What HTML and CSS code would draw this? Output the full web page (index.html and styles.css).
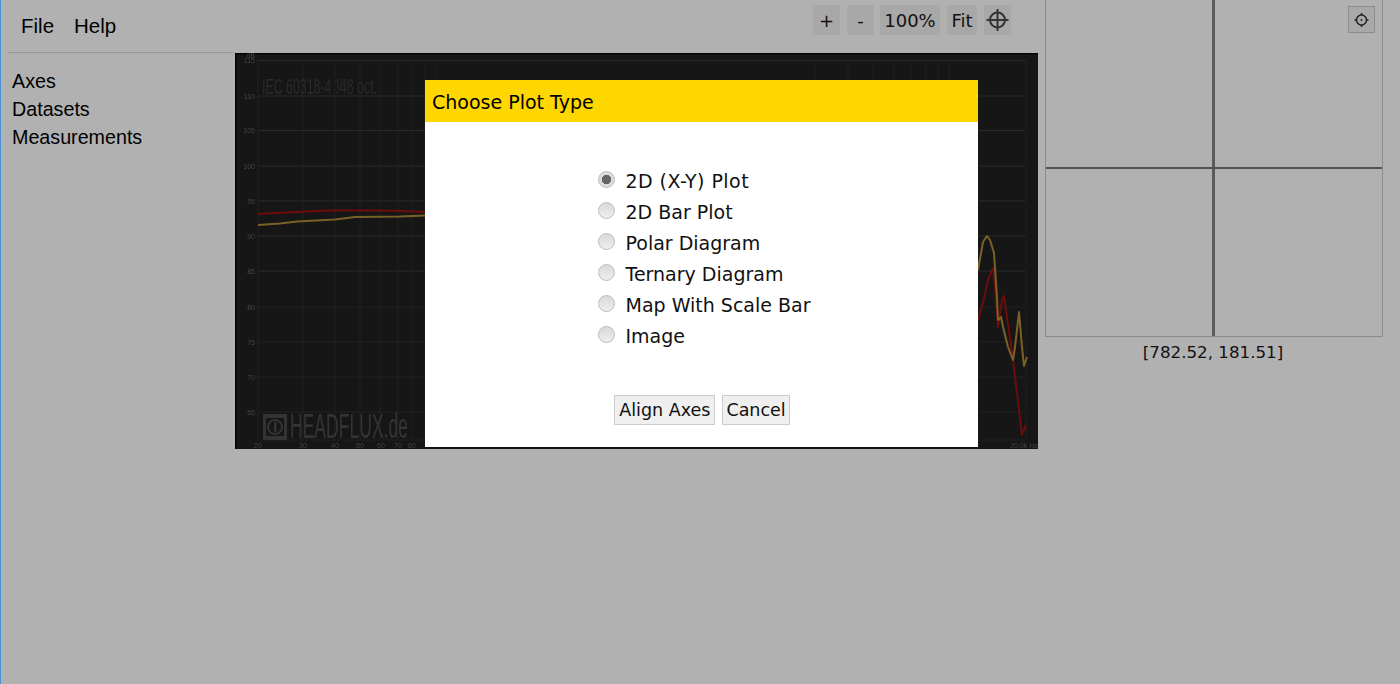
FILE: index.html
```html
<!DOCTYPE html>
<html lang="en">
<head>
<meta charset="utf-8">
<title>Plot digitizer</title>
<link rel="stylesheet" href="styles.css">
</head>
<body>
<div class="app">
  <div class="workspace">
    <header class="topbar">
      <nav class="menubar">
        <span class="menu-item">File</span>
        <span class="menu-item">Help</span>
      </nav>
      <div class="toolbar">
        <button class="tool tool-plus">+</button>
        <button class="tool tool-minus">-</button>
        <button class="tool tool-zoom">100%</button>
        <button class="tool tool-fit">Fit</button>
        <button class="tool tool-target" aria-label="Target">
          <svg width="27" height="30" viewBox="0 0 27 30"><circle cx="13.500" cy="15" r="7.500" fill="none" stroke="#333" stroke-width="2"/><path d="M13.500 4V26M2.500 15H24.500" stroke="#333" stroke-width="2"/></svg>
        </button>
      </div>
    </header>
    <div class="content">
      <aside class="sidebar">
        <div class="side-item">Axes</div>
        <div class="side-item">Datasets</div>
        <div class="side-item">Measurements</div>
      </aside>
      <div class="chart">
        <svg class="chart-svg" width="803" height="396" viewBox="235 53 803 396">
          <rect x="235" y="53" width="803" height="396" fill="#161616"/>
          <path d="M235 53.500H1038M235.500 53V449" stroke="#000" stroke-width="1.500"/>
          <g stroke="#2b2b2b" stroke-width="1">
            <path d="M258 60.500H1026M258 96H1026M258 130.500H1026M258 166H1026M258 201H1026M258 236H1026M258 271H1026"/>
          </g>
          <g stroke="#212121" stroke-width="1">
            <path d="M258 307H1026M258 342H1026M258 377H1026M258 412H1026M258 440H1026"/>
            <path d="M258 60V440M303 60V440M335 60V440M360 60V440M380 60V440M398 60V440M412 60V440M425 60V440M436 60V440M815 60V440M848 60V440M873 60V440M894 60V440M911 60V440M926 60V440M938 60V440M949 60V440M1026 60V440"/>
          </g>
          <g class="tick-text" text-anchor="end">
            <text x="255" y="58">dB</text>
            <text x="255" y="63">115</text>
            <text x="255" y="99">110</text>
            <text x="255" y="133">105</text>
            <text x="255" y="169">100</text>
            <text x="255" y="204">95</text>
            <text x="255" y="239">90</text>
            <text x="255" y="274">85</text>
            <text x="255" y="310">80</text>
            <text x="255" y="345">75</text>
            <text x="255" y="380">70</text>
            <text x="255" y="415">65</text>
          </g>
          <g class="tick-text" text-anchor="middle">
            <text x="258" y="448">20</text>
            <text x="303" y="448">30</text>
            <text x="335" y="448">40</text>
            <text x="360" y="448">50</text>
            <text x="381" y="448">60</text>
            <text x="398" y="448">70</text>
            <text x="412" y="448">80</text>
            <text x="1024" y="448">20.0k Hz</text>
          </g>
          <text class="iec" x="262" y="94" textLength="115" lengthAdjust="spacingAndGlyphs">IEC 60318-4  ⅟48 oct.</text>
          <g class="logo">
            <rect x="263" y="414" width="24" height="26" fill="#333"/>
            <rect x="266" y="418" width="18" height="18" fill="#161616"/>
            <circle cx="275" cy="427" r="7" fill="none" stroke="#333" stroke-width="2"/>
            <rect x="274" y="422" width="2.500" height="10" fill="#333"/>
          </g>
          <text class="brand" x="290" y="438" textLength="118" lengthAdjust="spacingAndGlyphs">HEADFLUX.de</text>
          <g fill="none" stroke-width="2" stroke-linejoin="round">
            <path stroke="#7a6226" d="M258 225L280 223.500L297 221.500L335 219.500L355 217L400 216.500L426 215.500"/>
            <path stroke="#6e0c0c" d="M258 214L275 213L297 212L327 210.500L380 210.500L400 211L426 212"/>
            <path stroke="#6e0c0c" d="M978 320L983 303L988 280L993 268L995 287L998 327L1002 300L1004 296L1007 317L1013 360L1017 393L1022 435L1026 425"/>
            <path stroke="#7a6226" d="M978 270L983 242L987 236L990 240L994 253L997 297L998 320L1001 317L1003 327L1008 347L1013 360L1015 347L1019 312L1022 347L1024 366L1027 357"/>
          </g>
        </svg>
      </div>
    </div>
  </div>
  <aside class="inspector">
    <div class="magnifier">
      <span class="cross-v"></span>
      <span class="cross-h"></span>
      <button class="gear" aria-label="Settings">
        <svg width="17" height="17" viewBox="0 0 17 17"><circle cx="8.500" cy="9" r="5" fill="none" stroke="#222" stroke-width="1.500"/><circle cx="8.500" cy="9" r="1" fill="#222"/><path d="M8.500 2V4M8.500 14V16M1.500 9H3.500M13.500 9H15.500" stroke="#222" stroke-width="1.500"/></svg>
      </button>
    </div>
    <div class="coords">[782.52, 181.51]</div>
  </aside>
</div>

<section class="dialog">
  <h2 class="dialog-title">Choose Plot Type</h2>
  <div class="dialog-body">
    <div class="options">
      <label class="option"><input type="radio" name="plot" checked><span class="label-wide">2D (X-Y) Plot</span></label>
      <label class="option"><input type="radio" name="plot"><span>2D Bar Plot</span></label>
      <label class="option"><input type="radio" name="plot"><span>Polar Diagram</span></label>
      <label class="option"><input type="radio" name="plot"><span>Ternary Diagram</span></label>
      <label class="option"><input type="radio" name="plot"><span>Map With Scale Bar</span></label>
      <label class="option"><input type="radio" name="plot"><span>Image</span></label>
    </div>
    <div class="actions">
      <button class="action">Align Axes</button>
      <button class="action action-cancel">Cancel</button>
    </div>
  </div>
</section>
</body>
</html>
```
FILE: styles.css
```css
* { box-sizing: border-box; }
html, body { margin: 0; height: 100%; }
body {
  background: #b1b1b1;
  color: #000;
  font-family: "DejaVu Sans", sans-serif;
  overflow: hidden;
  border-left: 1px solid #4a90d9;
}
.app { display: flex; height: 684px; }
.workspace { width: 1044px; flex: none; }
.topbar { display: flex; height: 53px; }
.menubar {
  width: 228px;
  margin-left: 6px;
  padding-left: 14px;
  display: flex;
  gap: 20px;
  align-items: center;
  height: 53px;
  border-bottom: 1px solid #9a9a9a;
  font-family: "Liberation Sans", Arial, sans-serif;
  font-size: 20.500px;
}
.toolbar { margin-left: 578px; display: flex; gap: 7px; padding-top: 5px; }
.tool {
  height: 30px;
  border: 0;
  padding: 0;
  background: #a8a8a8;
  color: #111;
  font: 18px "DejaVu Sans", sans-serif;
}
.tool-plus, .tool-minus, .tool-target { width: 27px; }
.tool-zoom { width: 60px; margin-left: -1px; }
.tool-fit { width: 30px; }
.tool-target svg { display: block; }
.content { display: flex; }
.sidebar {
  width: 234px;
  flex: none;
  padding: 14px 0 0 11px;
  font-family: "Liberation Sans", Arial, sans-serif;
  font-size: 19.700px;
}
.side-item { height: 28px; line-height: 28px; }
.chart { width: 803px; height: 396px; }
.chart-svg { display: block; filter: blur(0.7px); }
.tick-text { font: 7px "Liberation Sans", Arial, sans-serif; fill: #444; }
.iec { font: 22px "Liberation Sans", Arial, sans-serif; fill: #2a2a2a; }
.brand { font: 35px "Liberation Sans", Arial, sans-serif; fill: #343434; }
.inspector { width: 338px; flex: none; }
.magnifier {
  position: relative;
  height: 337px;
  border: 1.500px solid #8c8c8c;
  border-top: 0;
}
.cross-v { position: absolute; left: 166px; top: 0; bottom: 0; width: 3px; background: #5c5c5c; }
.cross-h { position: absolute; left: 0; right: 0; top: 167px; height: 2px; background: #555; }
.gear {
  position: absolute;
  right: 7px;
  top: 6px;
  width: 27px;
  height: 27px;
  padding: 0;
  border: 1px solid #8c8c8c;
  background: #a9a9a9;
  display: flex;
  align-items: center;
  justify-content: center;
}
.coords { text-align: center; font-size: 16.700px; line-height: 20px; margin-top: 5px; padding-right: 2px; color: #111; }
.dialog {
  position: absolute;
  left: 425px;
  top: 80px;
  width: 553px;
  height: 368px;
  background: #fff;
  border-bottom: 1px solid #111;
}
.dialog-title {
  margin: 0;
  height: 42px;
  line-height: 44px;
  padding-left: 7px;
  background: #ffd700;
  font-size: 19px;
  font-weight: 400;
}
.dialog-body { display: flex; flex-direction: column; align-items: center; }
.options { display: flex; flex-direction: column; margin: 44px 0 0 5px; width: 213px; }
.option { display: flex; align-items: center; height: 31px; font-size: 19px; color: #111; white-space: nowrap; }
.option span { margin-left: 11px; position: relative; top: -1px; }
.option .label-wide { letter-spacing: 0.45px; }
.option input {
  appearance: none;
  width: 17px;
  height: 17px;
  margin: 0;
  border-radius: 50%;
  border: 1px solid #bcbcbc;
  background: linear-gradient(#d9d9d9, #eeeeee);
  position: relative;
  top: -2px;
  flex: none;
}
.option input:checked { background: radial-gradient(circle, #666 0 4.500px, #dcdcdc 5px); }
.actions { display: flex; gap: 7px; margin-top: 43px; padding-left: 1px; }
.action {
  height: 30px;
  padding: 0 4px;
  background: #efefef;
  border: 1px solid #ccc;
  color: #111;
  font: 17.500px "DejaVu Sans", sans-serif;
}
.action-cancel { padding: 0 3px; }
```
